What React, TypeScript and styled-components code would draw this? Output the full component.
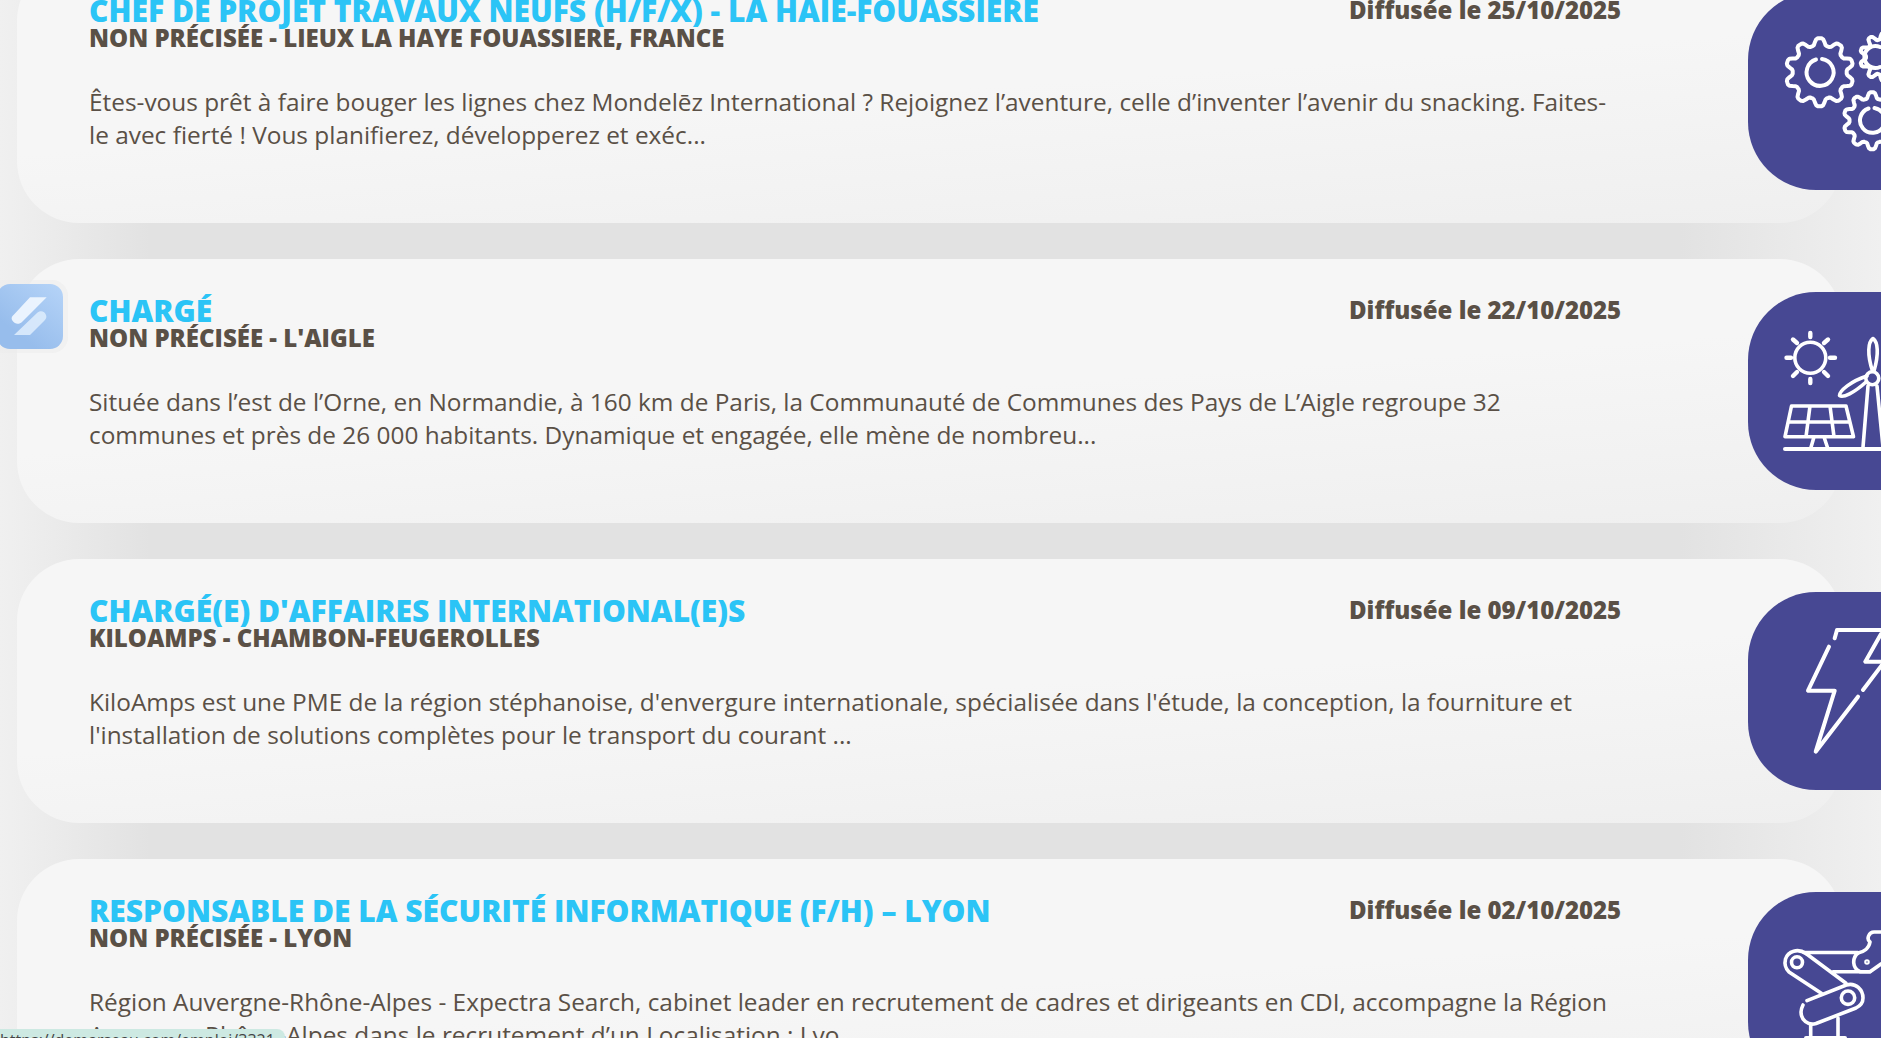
import React from "react";
import styled, { createGlobalStyle } from "styled-components";

const GlobalStyle = createGlobalStyle`
  html, body {
    margin: 0;
    padding: 0;
    height: 1042px;
    overflow: hidden;
    background: #ffffff;
  }
  body {
    font-family: "Open Sans", "Liberation Sans", sans-serif;
  }
`;

// wavy outline of a cog, sampled around the circle
function gearPath(cx: number, cy: number, r: number, depth: number, teeth: number) {
  const points: string[] = [];
  for (let i = 0; i < 120; i++) {
    const a = (i / 120) * Math.PI * 2;
    const wave = Math.max(-1, Math.min(1, Math.cos(teeth * a) * 1.5));
    const rr = r + depth * wave;
    points.push(`${(cx + rr * Math.sin(a)).toFixed(1)} ${(cy - rr * Math.cos(a)).toFixed(1)}`);
  }
  return `M${points.join("L")}Z`;
}

function GearsIcon() {
  return (
    <IconSvg viewBox="0 0 133 198">
      <g fill="none" stroke="#fff" strokeWidth="4" strokeLinecap="round" strokeLinejoin="round">
        <path d={gearPath(71.7, 80.3, 30.5, 3.5, 10)} />
        <path d="M68 67.5A13.5 13.5 0 1 0 74 67" />
        <path d={gearPath(136, 65, 21, 3, 10)} />
        <path d={gearPath(124, 128.7, 25.5, 3, 10)} />
        <path d="M120.5 116.5A12.5 12.5 0 1 0 126.5 116" />
        <path d="M132 55A11 11 0 1 0 132 75" />
      </g>
    </IconSvg>
  );
}

function EnergyIcon() {
  return (
    <IconSvg viewBox="0 0 133 198">
      <g fill="none" stroke="#fff" strokeLinecap="round" strokeLinejoin="round">
        <circle cx="62.3" cy="65.7" r="15.5" strokeWidth="3.6" />
        <path
          d="M62.3 41V45M62.3 87V91M38.5 65.7H43M82 65.7H87M45 47.5L49 51M76 80L80 84M80 47.5L76 51M49 80L45 84"
          strokeWidth="4.4"
        />
        <path d="M37 157H133" strokeWidth="4" />
        <path
          d="M43.5 114H98L105.5 144.7H37ZM41 130H102M62 114L58 144.7M82 114L86 144.7M66 145L62.5 157M76 145L80 157"
          strokeWidth="3.6"
        />
        <path d="M115 155L120 94M135 155L129 94" strokeWidth="3.6" />
        <path d="M124.5 79C119 62 120 50 125 46.5C130 50 131 62 126 79Z" strokeWidth="3.6" />
        <path d="M118 90C106 101 95 106 91.5 103.5C91.5 99 103 89 119 84" strokeWidth="3.6" />
        <circle cx="124.3" cy="86.3" r="6.5" strokeWidth="3.6" />
      </g>
    </IconSvg>
  );
}

function BoltIcon() {
  return (
    <IconSvg viewBox="0 0 133 198">
      <g fill="none" stroke="#fff" strokeWidth="4" strokeLinecap="round" strokeLinejoin="round">
        <path d="M86.7 46.3L89 38H134" />
        <path d="M81 54.7L60 98.7H86.7L67.7 159.7L110 104.7" />
        <path d="M115 98L134 73" />
        <path d="M133 42L117.3 69.7H134" />
      </g>
    </IconSvg>
  );
}

function RobotIcon() {
  return (
    <IconSvg viewBox="0 0 133 198">
      <g fill="none" stroke="#fff" strokeWidth="3.6" strokeLinecap="round" strokeLinejoin="round">
        <circle cx="49" cy="70.3" r="5.5" />
        <path d="M58 61.5L98 91.3M56 60.5H110M85 79.7H122" />
        <path d="M58 61.5C50 56 40 59 37.5 67C36 73 38 77 41 80L73.3 101.3" />
        <path d="M59 108.7L98.3 93C108 90 115 98 115 106C115 111 112 114 108 116L68 131.5C60 134 53 128 53 120C53 117 54 115 55 113" />
        <circle cx="100" cy="105.7" r="6.7" />
        <path d="M62.7 133V144M90 126V144" />
        <path d="M110 61C104 66 104 76 112 79.7H122L133 72" />
        <path d="M110 61C116 60 121 56 122 50C118 47 121 40 126 40H133" />
        <circle cx="119" cy="70" r="1" />
      </g>
      <BasePlate x="56" y="144" width="43" height="10" rx="2" />
    </IconSvg>
  );
}

function AppBadge() {
  return (
    <LogoSvg viewBox="0 0 64 66">
      <defs>
        <linearGradient id="badgeBg" x1="1" y1="0" x2="0.35" y2="0.8">
          <stop offset="0" stopColor="#b6d4f8" />
          <stop offset="1" stopColor="#97bdec" />
        </linearGradient>
      </defs>
      <rect x="-3" y="0" width="66" height="65" rx="13" fill="url(#badgeBg)" />
      <path d="M30 13.3H46.7L22 38C19 41 14 40 12 36C11 34 12 32 14 30.5Z" fill="#eef5fe" opacity="0.95" />
      <path
        d="M37 29C40 26 45 27 46 31C47 33 46 35 44.5 36.5L30 51H14Z"
        fill="#dcebfc"
        opacity="0.9"
      />
    </LogoSvg>
  );
}

const jobs = [
  {
    title: "CHEF DE PROJET TRAVAUX NEUFS (H/F/X) - LA HAIE-FOUASSIERE",
    place: "NON PRÉCISÉE - LIEUX LA HAYE FOUASSIERE, FRANCE",
    date: "25/10/2025",
    text: "Êtes-vous prêt à faire bouger les lignes chez Mondelēz International ? Rejoignez l’aventure, celle d’inventer l’avenir du snacking. Faites-le avec fierté ! Vous planifierez, développerez et exéc...",
    icon: <GearsIcon />,
  },
  {
    title: "CHARGÉ",
    place: "NON PRÉCISÉE - L'AIGLE",
    date: "22/10/2025",
    text: "Située dans l’est de l’Orne, en Normandie, à 160 km de Paris, la Communauté de Communes des Pays de L’Aigle regroupe 32 communes et près de 26 000 habitants. Dynamique et engagée, elle mène de nombreu...",
    icon: <EnergyIcon />,
    badge: true,
  },
  {
    title: "CHARGÉ(E) D'AFFAIRES INTERNATIONAL(E)S",
    place: "KILOAMPS - CHAMBON-FEUGEROLLES",
    date: "09/10/2025",
    text: "KiloAmps est une PME de la région stéphanoise, d'envergure internationale, spécialisée dans l'étude, la conception, la fourniture et l'installation de solutions complètes pour le transport du courant ...",
    icon: <BoltIcon />,
  },
  {
    title: "RESPONSABLE DE LA SÉCURITÉ INFORMATIQUE (F/H) – LYON",
    place: "NON PRÉCISÉE - LYON",
    date: "02/10/2025",
    text: "Région Auvergne-Rhône-Alpes - Expectra Search, cabinet leader en recrutement de cadres et dirigeants en CDI, accompagne la Région Auvergne-Rhône-Alpes dans le recrutement d’un Localisation : Lyo...",
    icon: <RobotIcon />,
  },
];

export default function App() {
  return (
    <>
      <GlobalStyle />
      <Viewport>
        <List>
          {jobs.map((job) => (
            <Row key={job.date}>
              <Card>
                {job.badge && (
                  <BadgeWrap>
                    <AppBadge />
                  </BadgeWrap>
                )}
                <CardBody>
                  <Head>
                    <Title>{job.title}</Title>
                    <DateLabel>Diffusée le {job.date}</DateLabel>
                  </Head>
                  <Place>{job.place}</Place>
                  <Summary>{job.text}</Summary>
                </CardBody>
              </Card>
              <IconTile>{job.icon}</IconTile>
            </Row>
          ))}
        </List>
        <StatusBar>https://demarseau.com/emploi/3321</StatusBar>
      </Viewport>
    </>
  );
}

const Viewport = styled.div`
  position: relative;
  height: 1038px;
  overflow: hidden;
  background: linear-gradient(90deg, #f0f0f0 0, #e2e2e2 150px, #e2e2e2 1680px, #f0f0f0 1881px);
`;

const List = styled.div`
  display: flex;
  flex-direction: column;
  gap: 36px;
  margin-top: -41px;
`;

const Row = styled.div`
  position: relative;
  padding-left: 17px;
  padding-right: 39px;
`;

const Card = styled.div`
  position: relative;
  height: 264px;
  box-sizing: border-box;
  border-radius: 62px;
  background: linear-gradient(176deg, #f6f6f6 0, #f6f6f6 50%, #efefef 100%);
`;

const CardBody = styled.div`
  box-sizing: border-box;
  padding: 34px 0 0 72px;
  width: 1604px;
  color: #5a5046;
`;

const Head = styled.div`
  display: flex;
  justify-content: space-between;
  align-items: flex-start;
`;

const Title = styled.div`
  font-size: 30px;
  line-height: 36px;
  font-weight: 800;
  color: #2bc4f6;
`;

const DateLabel = styled.div`
  font-size: 24px;
  line-height: 33px;
  font-weight: 800;
  color: #5a5046;
  width: 272px;
  white-space: nowrap;
`;

const Place = styled.div`
  margin-top: -7px;
  font-size: 24px;
  line-height: 32px;
  font-weight: 800;
`;

const Summary = styled.p`
  margin: 31px 0 0;
  font-size: 24.4px;
  line-height: 33px;
  font-weight: 400;
`;

const IconTile = styled.div`
  position: absolute;
  top: 33px;
  right: 0;
  width: 133px;
  height: 198px;
  overflow: hidden;
  border-radius: 68px 0 0 68px;
  background: #474893;
`;

const IconSvg = styled.svg`
  display: block;
  width: 133px;
  height: 198px;
`;

const BasePlate = styled.rect`
  fill: #fff;
`;

const BadgeWrap = styled.div`
  position: absolute;
  left: -17px;
  top: 21px;
  width: 68px;
  height: 73px;
  padding: 4px 4px 4px 0;
  border-radius: 0 16px 16px 0;
  background: rgba(235, 235, 235, 0.5);
  box-sizing: border-box;
`;

const LogoSvg = styled.svg`
  display: block;
  width: 64px;
  height: 66px;
`;

const StatusBar = styled.div`
  position: absolute;
  left: 0;
  bottom: 0;
  width: 285px;
  height: 9px;
  overflow: hidden;
  border-radius: 0 8px 0 0;
  background: #cde9e2;
  color: #444;
  font-size: 16px;
  line-height: 22px;
  white-space: nowrap;
`;
